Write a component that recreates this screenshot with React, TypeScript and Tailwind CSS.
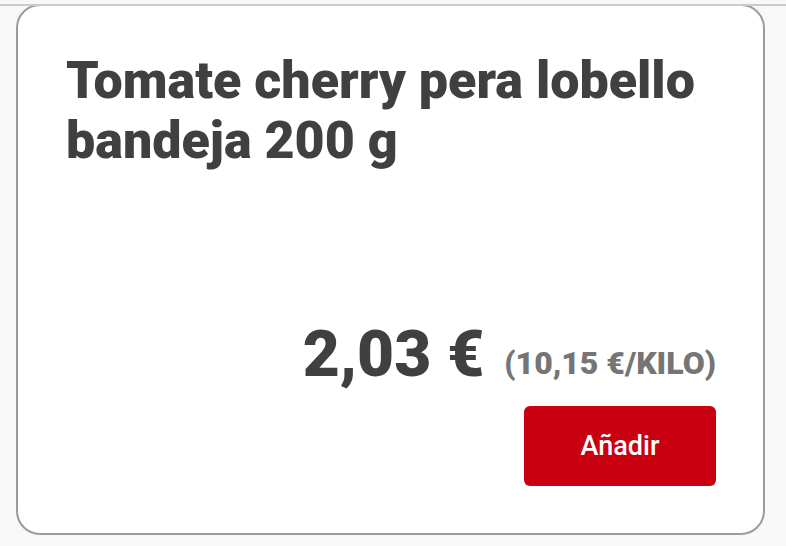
import React from "react";

export default function App() {
  return (
    <div
      className="relative w-[786px] h-[546px] bg-[#f8f8f8] overflow-hidden"
      style={{ fontFamily: "Roboto, 'Noto Sans', sans-serif" }}
    >
      <div className="absolute left-0 right-0 top-[4px] h-[2px] bg-[#cbcbcb] z-10" />
      <div className="pt-[4px] pl-[16px]">
        <div className="w-[749px] h-[531px] bg-white border-2 border-[#9b9b9b] rounded-[24px] flex flex-col pt-[45px] pb-[47px] pl-[48px] pr-[47px]">
          <h1 className="text-[52px] leading-[60px] font-black text-[#404040]">
            Tomate cherry pera lobello bandeja 200 g
          </h1>
          <div className="flex-1" />
          <div className="flex items-end justify-end gap-[20px]">
            <span className="text-[64px] leading-[64px] font-black text-[#404040]">2,03 €</span>
            <span className="text-[32px] leading-[40px] font-black text-[#757575] mb-[4px]">(10,15 €/KILO)</span>
          </div>
          <div className="flex justify-end mt-[19px]">
            <button className="w-[192px] h-[80px] rounded-[6px] bg-[#c8000f] text-white text-[27px] font-medium">
              Añadir
            </button>
          </div>
        </div>
      </div>
    </div>
  );
}
